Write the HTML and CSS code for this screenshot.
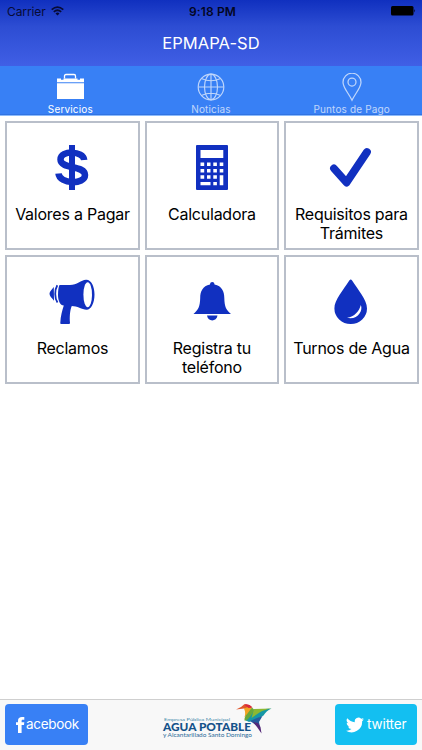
FILE: index.html
```html
<!DOCTYPE html>
<html lang="es">
<head>
<meta charset="utf-8">
<title>EPMAPA-SD</title>
<link rel="stylesheet" href="styles.css">
</head>
<body>
<div class="app">
  <header class="header">
    <div class="status">
      <div class="carrier"><span>Carrier</span>
        <svg width="13" height="10" viewBox="0 0 13 10" fill="none" stroke="#070b35" stroke-width="1.7"><path d="M.7 3.7Q6.5-1.6 12.3 3.7M2.8 5.9Q6.5 2.6 10.2 5.9"/><path d="M4.5 7.4Q6.5 5.8 8.5 7.4L6.5 9.5Z" fill="#070b35" stroke="none"/></svg>
      </div>
      <div class="time">9:18 PM</div>
      <svg class="battery" width="25" height="10" viewBox="0 0 25 10"><rect width="22.500" height="9.500" rx="1.500"/><path d="M23.300 3q1.700 1.700 0 3.500z"/></svg>
    </div>
    <h1 class="title">EPMAPA-SD</h1>
  </header>
  <nav class="tabs">
    <a class="tab active">
      <svg width="32" height="30" viewBox="0 0 32 30"><path d="M9.500 5.500V3q0-1.500 1.500-1.500h8q1.500 0 1.500 1.500v2.500" transform="translate(1 0)" fill="none" stroke="#fff" stroke-width="1.300"/><path d="M3 5.500h4V6.700h2.500V5.500h14V6.700H26V5.500h4v3.700H3zM3 10.200h27V26H3z" fill="#fff"/></svg>
      <span>Servicios</span></a>
    <a class="tab">
      <svg width="32" height="30" viewBox="0 0 32 30" fill="none" stroke="#fff" stroke-width="1.150"><circle cx="16" cy="14" r="12.800"/><ellipse cx="16" cy="14" rx="6.500" ry="12.800"/><path d="M16 1.200v25.600M3.200 14h25.600M6.400 5.500q9.600 4.500 19.200 0M6.400 22.500q9.600-4.500 19.200 0"/></svg>
      <span>Noticias</span></a>
    <a class="tab">
      <svg width="32" height="30" viewBox="0 0 32 30" fill="none" stroke="#fff" stroke-width="1.250"><path d="M16 27.200C12.500 20 7 14.700 7 9.200a9 9 0 0 1 18 0C25 14.700 19.500 20 16 27.200z"/><circle cx="16" cy="9" r="4"/></svg>
      <span>Puntos de Pago</span></a>
  </nav>
  <main class="grid">
    <section class="card">
      <svg width="48" height="48" viewBox="0 0 48 48"><path d="M36.200 16C35.500 6.500 12.500 6 12.500 15.500c0 10 24.500 5.500 24.500 15.500 0 10-25.500 9.500-26.500-1.500" fill="none" stroke="#1130c0" stroke-width="6.500"/><path d="M21 1h6v45h-6z"/></svg>
      <h2>Valores a Pagar</h2>
    </section>
    <section class="card">
      <svg width="48" height="48" viewBox="0 0 48 48"><path fill-rule="evenodd" d="M9 1h30q1 0 1 1v43q0 1-1 1H9q-1 0-1-1V2q0-1 1-1zM12.500 6v8h22.800V6z"/><path fill="#fff" d="M12.500 18.500h3.700V22h-3.700zM19 18.500h3.500V22H19zM25.300 18.500h3.600V22h-3.600zM31.700 18.500h3.600V22h-3.600zM12.500 25h3.700v3.400h-3.700zM19 25h3.500v3.400H19zM25.300 25h3.600v3.400h-3.600zM31.700 25h3.600v3.400h-3.600zM12.500 31.300h3.700v3.500h-3.700zM19 31.300h3.500v3.500H19zM25.300 31.300h3.600v3.500h-3.600zM31.700 31.300h3.600v9.900h-3.600zM12.500 37.900h10v3.300h-10zM25.300 37.900h3.600v3.300h-3.600z"/></svg>
      <h2>Calculadora</h2>
    </section>
    <section class="card">
      <svg width="48" height="48" viewBox="0 0 48 48"><path d="M7 24.500L19.500 38.500 40 8" fill="none" stroke="#1130c0" stroke-width="7.800" stroke-linecap="round" stroke-linejoin="round"/></svg>
      <h2>Requisitos para<br>Trámites</h2>
    </section>
    <section class="card">
      <svg width="48" height="48" viewBox="0 0 48 48"><path d="M11.500 7H22C29 7 33 2 38 1.700 43 1.300 46.500 8 46.500 16.500S43 32 38.500 31.800C34 31.500 29 28 23.800 28c-2 4.500-2.300 12-1.800 17q0 1-1 1h-8q-.8 0-.7-1c.2-7 2-12.500 3.500-17.500-3.500 0-5.800-4.800-5.800-10.500 0-4.500.5-8 1.500-10z"/><ellipse cx="39.700" cy="16.700" rx="4.300" ry="12.500" fill="#fff"/><path d="M9.300 7.200C6.500 12 6.500 20 9.500 24.600" fill="none" stroke="#1130c0" stroke-width="1.800"/><path d="M5.800 9C3.500 12 1.500 13.500 1.500 15.800s2 3.700 4.500 7z"/></svg>
      <h2>Reclamos</h2>
    </section>
    <section class="card">
      <svg width="48" height="48" viewBox="0 0 48 48"><path d="M22 6.500C22 3.200 26.500 3.200 26.500 6.500 34 8 36.200 13.500 36.300 20c.2 9 2 12 6.700 16H5.500c4.500-4 6.500-7 6.700-16 .1-6.500 2.300-12 9.800-13.500zM19 37.500h10.500C28.500 44 20 44 19 37.500z"/></svg>
      <h2>Registra tu<br>teléfono</h2>
    </section>
    <section class="card">
      <svg width="48" height="48" viewBox="0 0 48 48"><path d="M22.300 2.500q1.400-2 2.800 0C31 12 40 21.500 40 30.500a16.300 15.500 0 0 1-32.600 0C7.400 21.500 16.500 12 22.300 2.500z"/><path d="M33.800 27C36.500 33 30 42.500 20 39.800c7.500-1.300 12.300-6.300 13.800-12.800z" fill="#fff"/></svg>
      <h2>Turnos de Agua</h2>
    </section>
  </main>
  <footer class="footer">
    <a class="social fb"><svg width="9" height="16" viewBox="0 0 9 16"><path fill="#fff" d="M2 16V8H0V5.300h2V3.700C2 1.200 3.500 0 6 0h2.300v2.800H6.800c-.9 0-1.200.4-1.200 1.200v1.300h2.700L8 8H5.600v8z"/></svg><span>acebook</span></a>
    <svg class="logo" width="112" height="38" viewBox="0 0 112 38">
      <g font-family="Lato, sans-serif" fill="#2a6c98">
        <text x="3" y="16.600" font-size="4.500" textLength="66" lengthAdjust="spacingAndGlyphs" fill="#4389aa">Empresa Pública Municipal</text>
        <text x="2" y="26.700" font-size="12" font-weight="900" textLength="88" lengthAdjust="spacingAndGlyphs" fill="#14528a">AGUA POTABLE</text>
        <text x="2" y="32.600" font-size="5.500" textLength="89" lengthAdjust="spacingAndGlyphs">y Alcantarillado Santo Domingo</text>
      </g>
      <path fill="#e0562b" d="M75 5.500l5-2.500 3-2.500q5-1 8 2.500l-4 3-4-1.500z"/>
      <path fill="#f0a322" d="M83 4.500l4-1.500 4 1-4 7-3.500 2q1.500-4-.5-8.500z"/>
      <path fill="#d9283d" d="M83 .5q5-1 8.500 3l-4 .5z"/>
      <path fill="#68a83b" d="M91 3.500l3 3-3 7-3 3.500-4.500-.5q-.5-3.500 3-7z"/>
      <path fill="#1597a6" d="M93 6l17.500-1.500q-5 2-8 7L96 15l-8 3-3-1.500q5-3 8-10.500z"/>
      <path fill="#8bb832" d="M93 5l17.500-.5q-8 1.500-12 4l-8 5.500z"/>
      <path fill="#245b9d" d="M89 17l7-3 5.500-2-3.500 6 1 5-3-1-4-3z"/>
      <path fill="#542878" d="M92 18l5 1 2.500 4 1 6.500-4.500-6.500z"/>
    </svg>
    <a class="social tw"><svg width="18" height="16" viewBox="0 0 24 20"><path fill="#fff" d="M24 2.400a10 10 0 0 1-2.800.8A5 5 0 0 0 23.300.5a10 10 0 0 1-3.100 1.200 4.900 4.900 0 0 0-8.400 4.500A14 14 0 0 1 1.700 1a4.900 4.900 0 0 0 1.500 6.600A5 5 0 0 1 1 7a4.900 4.900 0 0 0 3.900 4.900 5 5 0 0 1-2.200.1 4.900 4.900 0 0 0 4.600 3.400A10 10 0 0 1 0 17.500a14 14 0 0 0 21.500-12.600A10 10 0 0 0 24 2.400z"/></svg><span>twitter</span></a>
  </footer>
</div>
</body>
</html>
```
FILE: styles.css
```css
* { box-sizing: border-box; }
body { margin: 0; background: #fff; color: #000; font-family: Inter, "Liberation Sans", sans-serif; }
.app { width: 422px; height: 750px; display: flex; flex-direction: column; overflow: hidden; }
.header { height: 65.500px; flex: none; background: linear-gradient(#1030bf 0, #2d4dd3 40%, #405fe5 100%); }
.status { height: 22px; display: grid; grid-template-columns: 1fr auto 1fr; align-items: center; padding: 0 6px 0 7px; color: #070b35; font-size: 12px; }
.carrier { display: flex; gap: 5px; align-items: center; letter-spacing: -.1px; }
.time { font-weight: 600; color: #03061f; letter-spacing: .15px; padding-left: 2px; }
.battery { justify-self: end; }
.title { margin: 0; padding-top: 10px; font-size: 16.500px; line-height: 22px; letter-spacing: .05px; font-weight: 400; text-align: center; color: #fff; }
.tabs { height: 50px; flex: none; display: grid; grid-template-columns: repeat(3, 1fr); background: #3880f5; border-bottom: 1px solid #8dbbfb; box-shadow: inset 0 -1px #3173e2; }
.tab { display: flex; flex-direction: column; align-items: center; padding-top: 7px; color: #fff; font-size: 10px; line-height: 12px; letter-spacing: .15px; opacity: .68; }
.tab.active { opacity: 1; }
.grid { flex: 1; display: grid; grid-template-columns: repeat(3, 134.500px); grid-auto-rows: 129px; gap: 5px; align-content: start; padding: 5px 0 0 5.200px; }
.card { border: 2px solid #b9bfca; display: flex; flex-direction: column; align-items: center; padding-top: 21px; text-align: center; }
.card svg { flex: none; fill: #1130c0; }
.card h2 { margin: 13px 0 0; font-size: 16px; line-height: 19px; font-weight: 400; letter-spacing: -.24px; white-space: nowrap; }
.footer { height: 51px; flex: none; display: flex; justify-content: space-between; padding: 4px 5px 0; background: #f8f8f8; border-top: 1px solid #cfcfcf; }
.social { height: 41px; display: flex; align-items: center; border-radius: 4px; color: #fff; font-size: 13.500px; line-height: 18px; letter-spacing: -.1px; }
.fb { width: 83px; padding-left: 11px; gap: 1px; background: #3880f5; letter-spacing: -.3px; }
.fb span, .tw span { margin-top: -2px; }
.tw { width: 82px; padding-left: 11px; gap: 3px; background: #13bff1; }
.logo { margin-left: 10px; }
```
